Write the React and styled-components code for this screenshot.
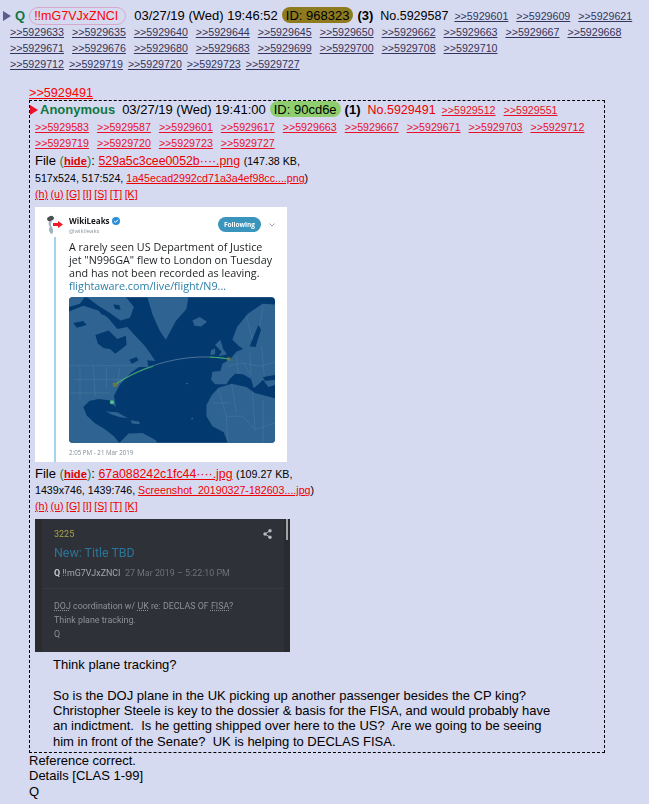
import React from 'react';
import styled, { createGlobalStyle } from 'styled-components';

const GlobalStyle = createGlobalStyle`
  html, body {
    margin: 0;
    padding: 0;
    background: #d6daf0;
    color: #000;
    font-family: "Liberation Sans", Arial, sans-serif;
    font-size: 13px;
  }
  body {
    height: 804px;
    overflow: hidden;
  }
`;

const Page = styled.div`
  padding-top: 8px;
`;

const Row = styled.div`
  display: flex;
  align-items: baseline;
  height: 16px;
  white-space: pre;
`;

const LinkRow = styled.div`
  display: flex;
  align-items: center;
  height: 16px;
  margin-top: ${p => p.$mt || 0}px;
  padding-left: ${p => p.$indent || 0}px;
  gap: ${p => p.$gap || 8}px;
`;

const LinkGroup = styled.span`
  display: flex;
  gap: 8px;
  margin-left: 6px;
`;

const Arrow = styled.svg`
  align-self: center;
  flex: none;
  width: 8px;
  height: 10px;
  margin-left: ${p => p.$ml}px;
  margin-right: -4px;
`;

const Name = styled.span`
  color: #117743;
  font-weight: bold;
  margin-left: ${p => p.$ml}px;
`;

const Trip = styled.span`
  color: #f00;
  font-size: 12.5px;
  border: 1px solid #d6a8cc;
  border-radius: 9px;
  padding: 1px 7px 1px 4px;
  margin-left: -4px;
`;

const Stamp = styled.span`
  margin-left: ${p => p.$ml || 0}px;
`;

const IdPill = styled.span`
  background: ${p => p.$bg};
  border-radius: 8px;
  padding: 1px 4px 0;
  margin-left: -4px;
  margin-right: -4px;
`;

const Replies = styled.b`
  color: #000;
`;

const PostNo = styled.span`
  color: ${p => p.$red ? '#e00' : '#000'};
  font-size: 12.5px;
  margin-left: -1px;
`;

const Backlink = styled.a`
  color: ${p => p.$red ? '#e8102a' : '#34345c'};
  font-size: 10.67px;
  text-decoration: underline;
`;

const Quote = styled.a`
  display: block;
  height: 16px;
  margin: 12px 0 0 29px;
  color: #f00;
  font-size: 12.67px;
  line-height: 18px;
  text-decoration: underline;
`;

const QuotedBox = styled.div`
  box-sizing: border-box;
  width: 576px;
  height: 653px;
  margin-left: 29px;
  padding-top: 1px;
  border: 1px dashed #000;
`;

const FileLine = styled.div`
  height: 16px;
  margin-top: ${p => p.$mt || 0}px;
  padding-left: 5px;
  line-height: 16px;
  white-space: pre;
`;

const Parens = styled.span`
  color: #2f7d4a;
`;

const Hide = styled.b`
  color: #d00;
  font-size: 11.2px;
  text-decoration: underline;
`;

const FileLink = styled.a`
  color: #e00;
  font-size: ${p => p.$small ? 10.67 : 12.3}px;
  text-decoration: underline;
`;

const Small = styled.span`
  font-size: 10.67px;
`;

const SearchLinks = styled.div`
  display: flex;
  align-items: center;
  height: 16px;
  padding-left: 5px;
  gap: 2.5px;
`;

const Tweet = styled.div`
  box-sizing: border-box;
  display: flex;
  width: 252px;
  height: 255px;
  margin: 5px 0 4px 5px;
  padding-left: 10px;
  background: #fff;
  filter: blur(0.3px);
`;

const TweetSide = styled.div`
  display: flex;
  flex-direction: column;
  align-items: center;
  width: 20px;
  padding-top: 8px;
  margin-right: 4px;
`;

const ThreadLine = styled.div`
  flex: 1;
  width: 2px;
  margin-top: 2px;
  background: #a6d4ec;
`;

const TweetMain = styled.div`
  width: 206px;
  padding-top: 8px;
  font-family: "Open Sans", sans-serif;
`;

const TweetHead = styled.div`
  display: flex;
  align-items: flex-start;
  height: 26px;
`;

const Author = styled.div`
  flex: 1;
`;

const AuthorName = styled.div`
  display: flex;
  align-items: center;
  gap: 2px;
  height: 11px;
  font-size: 8px;
  font-weight: bold;
  color: #14171a;
`;

const Handle = styled.div`
  font-size: 6px;
  margin-top: 1px;
  color: #8a959e;
`;

const Following = styled.div`
  width: 43px;
  height: 15px;
  margin-top: 2px;
  margin-right: 8px;
  line-height: 15px;
  text-align: center;
  border-radius: 8px;
  background: #3a95bd;
  color: #fff;
  font-size: 6.5px;
  font-weight: bold;
`;

const ChevronMark = styled.svg`
  width: 6px;
  height: 4px;
  margin-top: 8px;
`;

const TweetText = styled.div`
  font-size: 10.75px;
  line-height: 13px;
  color: #1c2022;
  white-space: nowrap;
`;

const TweetLink = styled.div`
  color: #2b7fa8;
`;

const MapFrame = styled.svg`
  display: block;
  width: 206px;
  height: 146px;
  margin-top: 4px;
  border-radius: 4px;
`;

const TweetTime = styled.div`
  margin-top: 5px;
  font-size: 6.2px;
  color: #7f8b94;
`;

const Shot = styled.div`
  display: flex;
  width: 255px;
  height: 133px;
  margin: 5px 0 5px 5px;
  background: #2f3138;
  filter: blur(0.3px);
  font-family: Roboto, sans-serif;
`;

const ShotStrip = styled.div`
  flex: none;
  width: ${p => p.$w}px;
  background: #292b31;
`;

const ShotBody = styled.div`
  flex: 1;
  display: flex;
  flex-direction: column;
`;

const ShotHead = styled.div`
  box-sizing: border-box;
  height: 70px;
  padding: 10px 0 0 12px;
  border-bottom: 1px solid #383a41;
`;

const ShotTop = styled.div`
  display: flex;
  justify-content: space-between;
  align-items: center;
  height: 10px;
  padding-right: 12px;
  color: #a8a24a;
  font-size: 9px;
`;

const ShotTitle = styled.div`
  margin-top: 4px;
  color: #2a7699;
  font-size: 12.4px;
  line-height: 20px;
`;

const ShotMeta = styled.div`
  margin-top: 5px;
  font-size: 8.9px;
  color: #6f7279;
  white-space: pre;
`;

const MetaQ = styled.b`
  color: #c9cacd;
`;

const MetaTrip = styled.span`
  color: #a4a6aa;
`;

const ShotText = styled.div`
  padding: 10px 0 0 12px;
  font-size: 8.9px;
  line-height: 14px;
  color: #8e9095;
  white-space: nowrap;
  u {
    text-decoration-style: dotted;
  }
`;

const ScrollBar = styled.div`
  width: 2px;
  height: 21px;
  margin-left: 2px;
  background: #a2a3a5;
`;

const Message = styled.div`
  padding-left: 23px;
  line-height: 15.33px;
  white-space: pre;
`;

const Tail = styled.div`
  margin-left: 29px;
  line-height: 15.33px;
  white-space: pre;
`;

const trackLinks = [
  ['5929633', '5929635', '5929640', '5929644', '5929645', '5929650', '5929662', '5929663', '5929667', '5929668'],
  ['5929671', '5929676', '5929680', '5929683', '5929699', '5929700', '5929708', '5929710'],
];
const tightLinks = ['5929712', '5929719', '5929720', '5929723', '5929727'];
const redLinks = [
  ['5929583', '5929587', '5929601', '5929617', '5929663', '5929667', '5929671', '5929703', '5929712'],
  ['5929719', '5929720', '5929723', '5929727'],
];

const Links = ({ ids, red }) => ids.map(id => (
  <Backlink key={id} $red={red}>{'>>' + id}</Backlink>
));

const Triangle = ({ color, ml }) => (
  <Arrow $ml={ml} viewBox="0 0 8 10"><path d="M0 0L8 5L0 10Z" fill={color} /></Arrow>
);

const Search = () => (
  <SearchLinks>
    {['(h)', '(u)', '[G]', '[I]', '[S]', '[T]', '[K]'].map(s => (
      <FileLink key={s} $small>{s}</FileLink>
    ))}
  </SearchLinks>
);

const Avatar = () => (
  <svg width="20" height="20" viewBox="0 0 20 20">
    <ellipse cx="5.5" cy="3.5" rx="3.5" ry="2.5" fill="#4b4f52" transform="rotate(-20 5.5 3.5)" />
    <path d="M4 6C3 9 4 11 5 12C3 14 4 18 7 19C9 17 8 13 6 11C6 9 6 8 7 6Z" fill="#9db4bd" />
    <path d="M8 8H13V6L18 9.5L13 13V11H8Z" fill="#ee1c25" />
  </svg>
);

const Badge = () => (
  <svg width="8" height="8" viewBox="0 0 8 8">
    <circle cx="4" cy="4" r="4" fill="#2b8fd8" />
    <path d="M2.2 4.1L3.5 5.4L5.9 2.8" fill="none" stroke="#fff" strokeWidth="1" />
  </svg>
);

const Chevron = () => (
  <ChevronMark viewBox="0 0 6 4">
    <path d="M0.5 0.5L3 3L5.5 0.5" fill="none" stroke="#9aa5ad" />
  </ChevronMark>
);

const Share = () => (
  <svg width="9" height="10" viewBox="0 0 9 10">
    <path d="M7 1.8L2 5L7 8.2" fill="none" stroke="#b9babd" />
    <circle cx="7" cy="1.8" r="1.7" fill="#b9babd" />
    <circle cx="2" cy="5" r="1.7" fill="#b9babd" />
    <circle cx="7" cy="8.2" r="1.7" fill="#b9babd" />
  </svg>
);

// coordinates follow a 3x crop of the map, hence the offset viewBox
const FlightMap = () => (
  <MapFrame viewBox="117 22 619 438">
    <rect x="117" y="22" width="619" height="438" fill="#023a70" />
    <g fill="#2f6391">
      <path d="M117 65L160 48L205 62L235 85L262 118L292 112L318 140L342 165L362 192L376 214L352 212L356 232L328 232L305 248L285 268L268 288L252 318L258 352L248 344L238 332L205 328L178 334L160 352L170 378L196 402L224 418L252 440L268 460L117 460Z" />
      <path d="M170 22L288 22L312 52L300 84L272 92L240 70L205 48Z" />
      <path d="M117 22L165 22L150 42L117 52Z" />
      <path d="M352 22L476 22L470 58L438 94L408 150L390 124L368 74Z" />
      <path d="M488 92L510 82L532 96L514 110L494 108Z" />
      <path d="M556 166L572 150L580 178L592 194L566 200L576 186Z" />
      <path d="M544 182L556 176L556 194L542 196Z" />
      <path d="M608 150L622 112L654 72L698 42L736 44L736 286L716 292L700 270L688 282L672 296L664 268L640 254L616 252L600 268L590 284L556 284L544 270L548 246L572 244L578 222L602 208L620 186L640 178L628 170Z" />
      <path d="M530 346L546 316L566 294L606 282L650 292L676 310L736 326L736 460L594 460L582 428L548 410L530 380Z" />
      <path d="M228 366L262 368L294 386L268 382L244 374Z" />
      <path d="M302 392L328 396L330 404L306 402Z" />
      <path d="M268 460L296 432L338 430L378 452L382 460Z" />
      <path d="M484 386l5-2 1 5-5 1zM468 280l6-1 1 4-6 1z" />
    </g>
    <g fill="#023a70">
      <path d="M196 136L236 122L262 148L288 138L290 166L256 192L240 178L222 176L204 162Z" />
      <path d="M298 210l22-8 6 10-20 10z" />
      <path d="M660 170L672 140L686 106L694 120L684 150L678 172Z" />
      <path d="M612 268L640 262L676 300L660 296Z" />
      <path d="M700 262L736 256L736 270L706 274Z" />
      <path d="M205 60l22 6 8 12-20-4zM250 44l18 2 4 14-16-2zM130 100l30-6 10 12-30 8z" />
    </g>
    <g fill="none" stroke="#9db8cc" strokeWidth="0.8" opacity="0.55">
      <path d="M117 228H330M150 228V330M190 228L196 320M230 232V300M270 232L262 290M130 270H280M120 310H240" />
      <path d="M590 230L640 220L690 230L736 216M620 200L626 252M660 190L664 260M696 170L704 262M640 220L660 250M650 78L668 150M700 50L690 110" />
      <path d="M566 300L590 380L640 380L676 420L736 400M606 284L620 370M668 306L676 420M550 340L600 340M590 380L594 460M700 330V460" />
    </g>
    <path d="M255 285C340 226 470 186 597 208" fill="none" stroke="#b9c6d2" strokeWidth="1.2" />
    <path d="M255 285C290 262 330 242 370 230" fill="none" stroke="#37c25a" strokeWidth="2.4" />
    <path d="M540 202C560 203 580 205 597 208" fill="none" stroke="#37c25a" strokeWidth="2.4" />
    <rect x="249" y="279" width="12" height="12" fill="#6d7a3c" />
    <rect x="592" y="203" width="10" height="10" fill="#6d7a3c" />
    <circle cx="246" cy="338" r="6" fill="#56c08d" />
  </MapFrame>
);

const App = () => (
  <Page>
    <GlobalStyle />
    <Row>
      <Triangle color="#5c5c90" ml={3} />
      <Name $ml={8}>Q</Name>
      <Stamp $ml={8}><Trip>!!mG7VJxZNCI</Trip></Stamp>
      <Stamp $ml={8}>03/27/19 (Wed) 19:46:52</Stamp>
      <Stamp $ml={8}><IdPill $bg="#8e7a1f">ID: 968323</IdPill></Stamp>
      <Stamp $ml={8}><Replies>(3)</Replies></Stamp>
      <Stamp $ml={8}><PostNo>No.5929587</PostNo></Stamp>
      <LinkGroup><Links ids={['5929601', '5929609', '5929621']} /></LinkGroup>
    </Row>
    {trackLinks.map(ids => (
      <LinkRow key={ids[0]} $indent={10}><Links ids={ids} /></LinkRow>
    ))}
    <LinkRow $indent={10} $gap={5}><Links ids={tightLinks} /></LinkRow>

    <Quote>{'>>5929491'}</Quote>
    <QuotedBox>
      <Row>
        <Triangle color="#e8102a" ml={0} />
        <Name $ml={6}>Anonymous</Name>
        <Stamp $ml={7}>03/27/19 (Wed) 19:41:00</Stamp>
        <Stamp $ml={8}><IdPill $bg="#8fce6e">ID: 90cd6e</IdPill></Stamp>
        <Stamp $ml={8}><Replies>(1)</Replies></Stamp>
        <Stamp $ml={8}><PostNo $red>No.5929491</PostNo></Stamp>
        <LinkGroup><Links ids={['5929512', '5929551']} red /></LinkGroup>
      </Row>
      <LinkRow $indent={5} $mt={1}><Links ids={redLinks[0]} red /></LinkRow>
      <LinkRow $indent={5}><Links ids={redLinks[1]} red /></LinkRow>

      <FileLine $mt={2}>
        File <Parens>(</Parens><Hide>hide</Hide><Parens>)</Parens>: <FileLink>529a5c3cee0052b····.png</FileLink> <Small>(147.38 KB,</Small>
      </FileLine>
      <FileLine $mt={1}>
        <Small>517x524, 517:524, </Small><FileLink $small>1a45ecad2992cd71a3a4ef98cc....png</FileLink><Small>)</Small>
      </FileLine>
      <Search />
      <Tweet>
        <TweetSide>
          <Avatar />
          <ThreadLine />
        </TweetSide>
        <TweetMain>
          <TweetHead>
            <Author>
              <AuthorName>WikiLeaks <Badge /></AuthorName>
              <Handle>@wikileaks</Handle>
            </Author>
            <Following>Following</Following>
            <Chevron />
          </TweetHead>
          <TweetText>
            A rarely seen US Department of Justice<br />
            jet "N996GA" flew to London on Tuesday<br />
            and has not been recorded as leaving.
            <TweetLink>flightaware.com/live/flight/N9...</TweetLink>
          </TweetText>
          <FlightMap />
          <TweetTime>2:05 PM - 21 Mar 2019</TweetTime>
        </TweetMain>
      </Tweet>

      <FileLine>
        File <Parens>(</Parens><Hide>hide</Hide><Parens>)</Parens>: <FileLink>67a088242c1fc44····.jpg</FileLink> <Small>(109.27 KB,</Small>
      </FileLine>
      <FileLine>
        <Small>1439x746, 1439:746, </Small><FileLink $small>Screenshot_20190327-182603....jpg</FileLink><Small>)</Small>
      </FileLine>
      <Search />
      <Shot>
        <ShotStrip $w={7} />
        <ShotBody>
          <ShotHead>
            <ShotTop>3225<Share /></ShotTop>
            <ShotTitle>New: Title TBD</ShotTitle>
            <ShotMeta><MetaQ>Q</MetaQ> <MetaTrip>!!mG7VJxZNCI</MetaTrip>  27 Mar 2019 – 5:22:10 PM</ShotMeta>
          </ShotHead>
          <ShotText>
            <u>DOJ</u> coordination w/ <u>UK</u> re: DECLAS OF <u>FISA</u>?<br />
            Think plane tracking.<br />
            Q
          </ShotText>
        </ShotBody>
        <ShotStrip $w={6}><ScrollBar /></ShotStrip>
      </Shot>
      <Message>
        {`Think plane tracking?

So is the DOJ plane in the UK picking up another passenger besides the CP king?
Christopher Steele is key to the dossier & basis for the FISA, and would probably have
an indictment.  Is he getting shipped over here to the US?  Are we going to be seeing
him in front of the Senate?  UK is helping to DECLAS FISA.`}
      </Message>
    </QuotedBox>
    <Tail>
      {`Reference correct.
Details [CLAS 1-99]
Q`}
    </Tail>
  </Page>
);

export default App;
